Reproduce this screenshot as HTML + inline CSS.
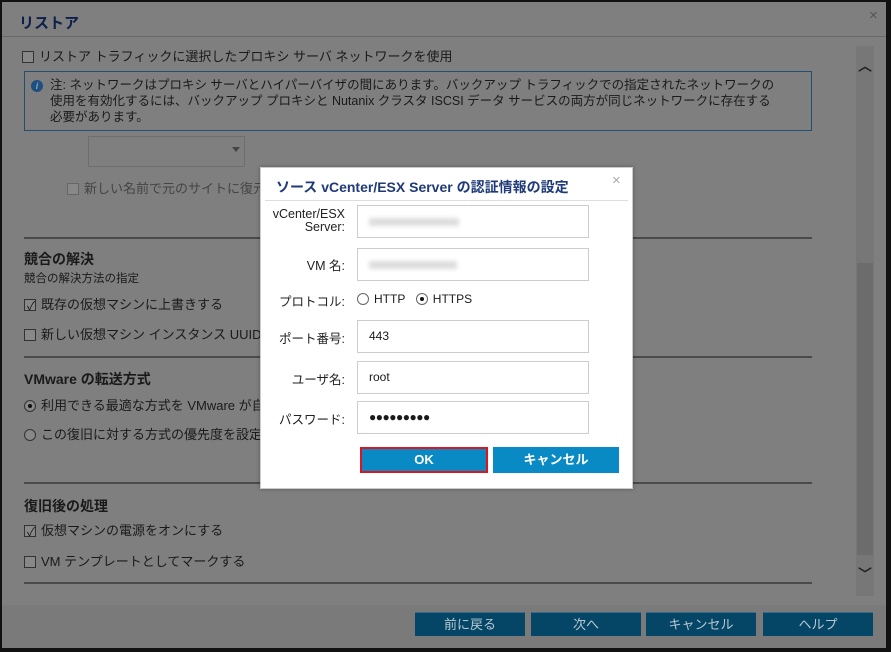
<!DOCTYPE html>
<html><head><meta charset="utf-8"><style>
*{box-sizing:border-box;margin:0;padding:0}
body{width:891px;height:652px;overflow:hidden;background:#111;font-family:"Liberation Sans","Noto Sans CJK JP",sans-serif;font-size:12px;color:#1a1a1a;position:relative}
.a{position:absolute}
#dlg{left:2px;top:2px;width:884px;height:646px;background:#7f7f7f}
.t{white-space:nowrap}
.line{height:2px;background:#4a4a4a;left:22px;width:788px}
.cb{display:inline-block;width:12px;height:12px;border:1px solid #333;background:#888;vertical-align:-2px;margin-right:5px;position:relative}
.rb{display:inline-block;width:12px;height:12px;border:1px solid #333;border-radius:50%;background:#888;vertical-align:-2px;margin-right:5px;position:relative}
.btn{background:#054666;color:#b8c8d2;text-align:center;line-height:24px;height:24px;top:612px;width:110px;font-size:13px;border-top:1px solid #3a6a85}
#m{left:260px;top:167px;width:373px;height:322px;background:#fff;border:1px solid #ccc;box-shadow:0 0 4px rgba(0,0,0,.3)}
#m .lab{width:84px;text-align:right;font-size:12.5px;color:#222}
#m .inp{left:96px;width:232px;height:33px;border:1px solid #ccc;background:#fff;font-size:12px;padding-left:11px;line-height:31px}
.blur{background:#ddd;filter:blur(2px);height:8px}
.mb{background:#0a8ac4;color:#fff;font-weight:bold;font-size:13px;text-align:center;line-height:26px;height:26px;top:279px}
</style></head><body>
<div id="dlg" class="a">
  <div class="a" style="left:0;top:0;width:884px;height:35px;border-bottom:1px solid #6a6a6a"></div>
  <div class="a t" style="left:17px;top:10px;font-size:15px;font-weight:bold;color:#0d1f4a">リストア</div>
  <div class="a t" style="left:867px;top:5px;font-size:15px;color:#555">×</div>
  <div class="a t" style="left:20px;top:44px;font-size:13px"><span class="cb"></span>リストア トラフィックに選択したプロキシ サーバ ネットワークを使用</div>
  <div class="a" style="left:22px;top:69px;width:788px;height:60px;border:1px solid #224e72"></div>
  <div class="a" style="left:29px;top:78px;width:12px;height:12px;border-radius:50%;background:#1e4f80;color:#8aa;font-size:9px;text-align:center;line-height:12px;font-style:italic;font-weight:bold">i</div>
  <div class="a t" style="left:48px;top:75px;font-size:12.5px;line-height:16px">注: ネットワークはプロキシ サーバとハイパーバイザの間にあります。バックアップ トラフィックでの指定されたネットワークの<br>使用を有効化するには、バックアップ プロキシと Nutanix クラスタ ISCSI データ サービスの両方が同じネットワークに存在する<br>必要があります。</div>
  <div class="a" style="left:86px;top:134px;width:157px;height:31px;border:1px solid #6e6e6e"></div>
  <div class="a" style="left:230px;top:145px;width:0;height:0;border-left:4px solid transparent;border-right:4px solid transparent;border-top:5px solid #444"></div>
  <div class="a t" style="left:65px;top:176px;font-size:13px;color:#444"><span class="cb" style="border-color:#666"></span>新しい名前で元のサイトに復元</div>
  <div class="a line" style="top:235px"></div>
  <div class="a t" style="left:22px;top:247px;font-size:14px;font-weight:bold">競合の解決</div>
  <div class="a t" style="left:22px;top:268px;font-size:11.5px">競合の解決方法の指定</div>
  <div class="a t" style="left:22px;top:292px;font-size:13px"><span class="cb"><span class="a" style="left:2px;top:-3px;font-size:12px">✓</span></span>既存の仮想マシンに上書きする</div>
  <div class="a t" style="left:22px;top:322px;font-size:13px"><span class="cb"></span>新しい仮想マシン インスタンス UUID</div>
  <div class="a line" style="top:354px"></div>
  <div class="a t" style="left:22px;top:367px;font-size:14px;font-weight:bold">VMware の転送方式</div>
  <div class="a t" style="left:22px;top:393px;font-size:13px"><span class="rb"><span class="a" style="left:3px;top:3px;width:4px;height:4px;border-radius:50%;background:#111"></span></span>利用できる最適な方式を VMware が自</div>
  <div class="a t" style="left:22px;top:422px;font-size:13px"><span class="rb"></span>この復旧に対する方式の優先度を設定</div>
  <div class="a line" style="top:480px"></div>
  <div class="a t" style="left:22px;top:494px;font-size:14px;font-weight:bold">復旧後の処理</div>
  <div class="a t" style="left:22px;top:518px;font-size:13px"><span class="cb"><span class="a" style="left:2px;top:-3px;font-size:12px">✓</span></span>仮想マシンの電源をオンにする</div>
  <div class="a t" style="left:22px;top:549px;font-size:13px"><span class="cb"></span>VM テンプレートとしてマークする</div>
  <div class="a line" style="top:580px"></div>
  <div class="a" style="left:854px;top:44px;width:18px;height:550px;background:#777"></div>
  <div class="a" style="left:855px;top:261px;width:16px;height:292px;background:#6c6c6c"></div>
  <div class="a t" style="left:856px;top:54px;font-size:14px;color:#222;font-weight:bold">︿</div>
  <div class="a t" style="left:856px;top:562px;font-size:14px;color:#222;font-weight:bold">﹀</div>
  <div class="a" style="left:0;top:603px;width:884px;height:43px;background:#7a7a7a"></div>
</div>
<div class="a btn" style="left:415px">前に戻る</div>
<div class="a btn" style="left:531px">次へ</div>
<div class="a btn" style="left:646px">キャンセル</div>
<div class="a btn" style="left:763px">ヘルプ</div>

<div id="m" class="a">
  <div class="a t" style="left:15px;top:9px;font-size:14px;font-weight:bold;color:#1f3a78">ソース vCenter/ESX Server の認証情報の設定</div>
  <div class="a t" style="left:351px;top:4px;font-size:15px;color:#aaa">×</div>
  <div class="a" style="left:4px;top:32px;width:363px;height:1px;background:#ddd"></div>
  <div class="a lab" style="left:0;top:40px;line-height:13px">vCenter/ESX<br>Server:</div>
  <div class="a inp" style="top:37px"><div class="blur" style="width:90px;margin-top:12px"></div></div>
  <div class="a lab" style="left:0;top:87px">VM 名:</div>
  <div class="a inp" style="top:80px"><div class="blur" style="width:88px;margin-top:12px"></div></div>
  <div class="a lab" style="left:0;top:123px">プロトコル:</div>
  <div class="a t" style="left:96px;top:124px;font-size:12px"><span class="rb" style="background:#fff;border-color:#666"></span>HTTP &nbsp;<span class="rb" style="background:#fff;border-color:#666;margin-left:4px"><span class="a" style="left:3px;top:3px;width:4px;height:4px;border-radius:50%;background:#111"></span></span>HTTPS</div>
  <div class="a lab" style="left:0;top:160px">ポート番号:</div>
  <div class="a inp" style="top:152px">443</div>
  <div class="a lab" style="left:0;top:201px">ユーザ名:</div>
  <div class="a inp" style="top:193px">root</div>
  <div class="a lab" style="left:0;top:241px">パスワード:</div>
  <div class="a inp" style="top:233px;font-size:12px;letter-spacing:-0.5px">●●●●●●●●●</div>
  <div class="a mb" style="left:99px;width:128px;border:2px solid #e0141e;line-height:22px">OK</div>
  <div class="a mb" style="left:232px;width:126px">キャンセル</div>
</div>
</body></html>
